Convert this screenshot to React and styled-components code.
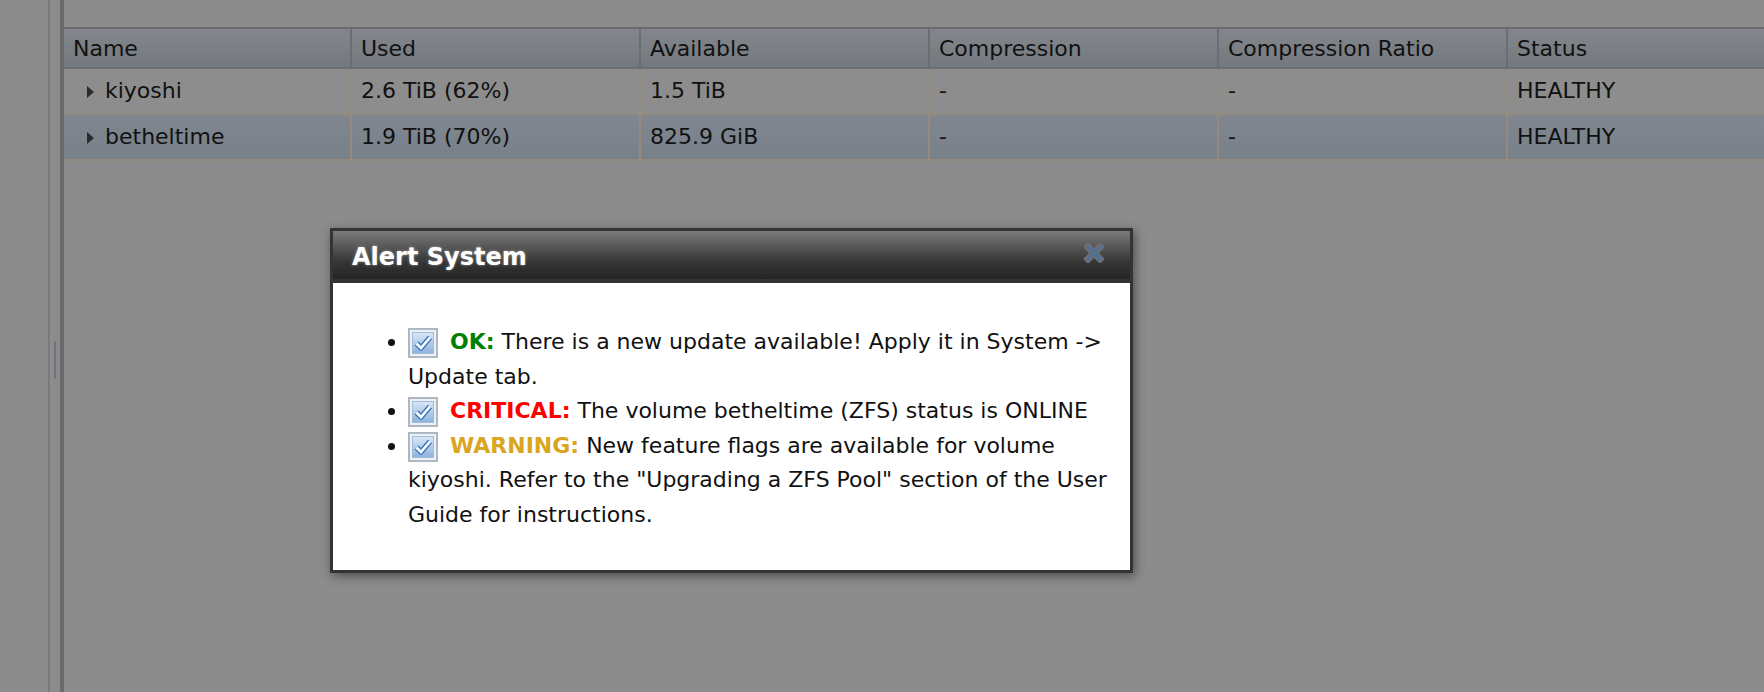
import React from 'react';
import styled, { createGlobalStyle } from 'styled-components';

const GlobalStyle = createGlobalStyle`
    html, body {
        margin: 0;
        padding: 0;
        height: 100%;
        overflow: hidden;
    }
    body {
        background: #8c8c8c;
        font-family: "DejaVu Sans", Verdana, sans-serif;
        color: #111;
    }
`;

const Screen = styled.div`
    position: relative;
    display: flex;
    height: 100vh;
    background: #8c8c8c;
`;

const Sidebar = styled.div`
    flex: none;
    width: 48px;
    border-right: 2px solid #7a7a7a;
`;

const Splitter = styled.div`
    flex: none;
    width: 10px;
    display: flex;
    justify-content: center;
    padding-top: 341px;
    box-sizing: border-box;
`;

const Grip = styled.div`
    width: 2px;
    height: 38px;
    background: #6f7479;
`;

const Content = styled.div`
    flex: 1;
    min-width: 0;
    overflow: hidden;
    border-left: 4px solid #676b70;
    padding-top: 27px;
`;

const Table = styled.div`
    border-top: 2px solid #6b6b6b;
`;

const Row = styled.div`
    display: grid;
    grid-template-columns: 288px repeat(4, 289px) 1fr;
    box-sizing: border-box;
    height: ${(p) => (p.$head ? 40 : 46)}px;
    border-bottom: 2px solid ${(p) => (p.$head ? '#6a6e73' : '#958a80')};
    background: ${(p) =>
        p.$head
            ? 'linear-gradient(#83878c, #74797f)'
            : p.$selected
            ? 'linear-gradient(#80878f, #78808a)'
            : '#8d8d8d'};
`;

const Cell = styled.div`
    padding: ${(p) => (p.$head ? '1px' : '0')} 0 0 9px;
    border-right: 2px solid ${(p) => (p.$head ? '#6a6e73' : '#958a80')};
    font-size: 22px;
    line-height: ${(p) => (p.$head ? 37 : 44)}px;
    white-space: nowrap;
    overflow: hidden;

    &:last-child {
        border-right: 0;
    }
`;

const Expander = styled.svg`
    width: 7px;
    height: 12px;
    margin: 0 11px 0 14px;
    vertical-align: 0;
`;

const Dialog = styled.div`
    position: absolute;
    left: 330px;
    top: 228px;
    width: 803px;
    box-sizing: border-box;
    border: 3px solid #343434;
    background: #fff;
    box-shadow: 2px 3px 10px rgba(0, 0, 0, 0.45);
`;

const TitleBar = styled.div`
    display: flex;
    justify-content: space-between;
    align-items: flex-start;
    height: 48px;
    padding: 0 26px 0 19px;
    background: linear-gradient(#7b7b7b, #5a5a5a 30%, #353535 65%, #242424);
    border-bottom: 4px solid #333;
`;

const Title = styled.h2`
    margin: 0;
    padding-top: 4px;
    font-size: 24px;
    font-weight: bold;
    line-height: 44px;
    color: #fff;
    text-shadow: 0 0 3px rgba(255, 255, 255, 0.45);
`;

const Close = styled.button`
    display: flex;
    width: 20px;
    height: 20px;
    margin-top: 12px;
    padding: 0;
    border: 0;
    background: none;
    cursor: pointer;
`;

const Body = styled.div`
    padding: 42px 10px 38px 35px;
`;

const AlertList = styled.ul`
    margin: 0;
    padding-left: 40px;
    font-size: 22px;
    line-height: 34.5px;
`;

const Level = styled.b`
    color: ${(p) => p.$color};
`;

const Check = styled.svg`
    width: 30px;
    height: 30px;
    margin-right: 5px;
    vertical-align: middle;
`;

const columns = ['Name', 'Used', 'Available', 'Compression', 'Compression Ratio', 'Status'];

const volumes = [
    { name: 'kiyoshi', used: '2.6 TiB (62%)', avail: '1.5 TiB', comp: '-', ratio: '-', status: 'HEALTHY' },
    { name: 'betheltime', used: '1.9 TiB (70%)', avail: '825.9 GiB', comp: '-', ratio: '-', status: 'HEALTHY', selected: true },
];

const alerts = [
    { level: 'OK', color: '#008000', text: 'There is a new update available! Apply it in System -> Update tab.' },
    { level: 'CRITICAL', color: '#ff0000', text: 'The volume betheltime (ZFS) status is ONLINE' },
    {
        level: 'WARNING',
        color: '#daa520',
        text: 'New feature flags are available for volume kiyoshi. Refer to the "Upgrading a ZFS Pool" section of the User Guide for instructions.',
    },
];

function CheckIcon() {
    return (
        <Check viewBox="0 0 30 30">
            <defs>
                <linearGradient id="chk" x1="0" y1="0" x2="0" y2="1">
                    <stop offset="0" stopColor="#d9e7f5" />
                    <stop offset="1" stopColor="#8db2dc" />
                </linearGradient>
            </defs>
            <rect x="1" y="1" width="28" height="28" fill="#eef1f4" stroke="#aeb7c2" strokeWidth="2" />
            <rect x="4.5" y="4.5" width="21" height="21" fill="url(#chk)" stroke="#9fbbdb" />
            <path d="M8.5 15.5 L13 20 L22 9.5" fill="none" stroke="#3a77c0" strokeWidth="5.5" strokeLinejoin="round" />
            <path d="M8.5 15.5 L13 20 L22 9.5" fill="none" stroke="#fff" strokeWidth="2.6" />
        </Check>
    );
}

export default function App() {
    return (
        <Screen>
            <GlobalStyle />
            <Sidebar />
            <Splitter>
                <Grip />
            </Splitter>
            <Content>
                <Table>
                    <Row $head>
                        {columns.map((c) => (
                            <Cell $head key={c}>{c}</Cell>
                        ))}
                    </Row>
                    {volumes.map((v) => (
                        <Row key={v.name} $selected={v.selected}>
                            <Cell>
                                <Expander viewBox="0 0 7 12">
                                    <polygon points="0,0 7,6 0,12" fill="#2b2b2b" />
                                </Expander>
                                {v.name}
                            </Cell>
                            <Cell>{v.used}</Cell>
                            <Cell>{v.avail}</Cell>
                            <Cell>{v.comp}</Cell>
                            <Cell>{v.ratio}</Cell>
                            <Cell>{v.status}</Cell>
                        </Row>
                    ))}
                </Table>
            </Content>

            <Dialog>
                <TitleBar>
                    <Title>Alert System</Title>
                    <Close aria-label="Close">
                        <svg width="20" height="20" viewBox="0 0 20 20">
                            <path d="M4 4 L16 16 M16 4 L4 16" stroke="#6f6f6f" strokeWidth="7" strokeLinecap="square" />
                            <path d="M4 4 L16 16 M16 4 L4 16" stroke="#55708f" strokeWidth="4" strokeLinecap="square" />
                        </svg>
                    </Close>
                </TitleBar>
                <Body>
                    <AlertList>
                        {alerts.map((a) => (
                            <li key={a.level}>
                                <CheckIcon /> <Level $color={a.color}>{a.level}:</Level> {a.text}
                            </li>
                        ))}
                    </AlertList>
                </Body>
            </Dialog>
        </Screen>
    );
}
